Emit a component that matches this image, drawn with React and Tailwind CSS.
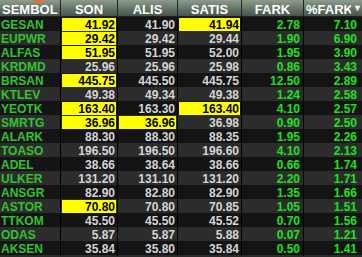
const ROWS = [
  ['GESAN', '41.92', '41.90', '41.94', '2.78', '7.10', [1, 3]],
  ['EUPWR', '29.42', '29.42', '29.44', '1.90', '6.90', [1]],
  ['ALFAS', '51.95', '51.95', '52.00', '1.95', '3.90', [1]],
  ['KRDMD', '25.96', '25.96', '25.98', '0.86', '3.43', []],
  ['BRSAN', '445.75', '445.50', '445.75', '12.50', '2.89', [1]],
  ['KTLEV', '49.38', '49.34', '49.38', '1.24', '2.58', []],
  ['YEOTK', '163.40', '163.30', '163.40', '4.10', '2.57', [1, 3]],
  ['SMRTG', '36.96', '36.96', '36.98', '0.90', '2.50', [1, 2]],
  ['ALARK', '88.30', '88.30', '88.35', '1.95', '2.26', []],
  ['TOASO', '196.50', '196.50', '196.60', '4.10', '2.13', []],
  ['ADEL', '38.66', '38.64', '38.66', '0.66', '1.74', []],
  ['ULKER', '131.20', '131.10', '131.20', '2.20', '1.71', []],
  ['ANSGR', '82.90', '82.80', '82.90', '1.35', '1.66', []],
  ['ASTOR', '70.80', '70.80', '70.85', '1.05', '1.51', [1]],
  ['TTKOM', '45.50', '45.50', '45.52', '0.70', '1.56', []],
  ['ODAS', '5.87', '5.87', '5.88', '0.07', '1.21', []],
  ['AKSEN', '35.84', '35.80', '35.84', '0.50', '1.41', []],
]

const HEADERS = ['SEMBOL', 'SON', 'ALIS', 'SATIS', 'FARK']

function PriceCell({ value, hot }) {
  return (
    <div className="h-full border-r border-black py-px pl-px pr-px">
      <div
        className={
          hot
            ? 'flex h-[13px] items-center justify-end bg-[#ffff00] pr-[1px] text-black'
            : 'flex h-[13px] items-center justify-end pr-[1px] text-[#d4d4d4]'
        }
      >
        {value}
      </div>
    </div>
  )
}

export default function App() {
  return (
    <div
      className="relative w-[362px] overflow-hidden bg-[#141414] text-[12px] font-bold leading-none"
      style={{ fontFamily: '"Liberation Sans", Arial, sans-serif' }}
    >
      <div className="absolute left-[34px] top-0 h-[3px] w-[9px] bg-[#e0703a]" />
      <div className="grid h-[17px] grid-cols-[61px_57px_60px_64px_62px_58px] border-b border-[#1a221a] bg-gradient-to-b from-[#8e9c8c] to-[#46544a] text-[13px] text-white">
        {HEADERS.map((h, i) => (
          <div
            key={h}
            className={
              i === 0
                ? 'flex items-center border-r border-[#1f261f] pl-[2px] pt-[2px]'
                : 'flex items-center justify-center border-r border-[#1f261f] pt-[2px]'
            }
          >
            {h}
          </div>
        ))}
        <div className="flex items-center pl-[2px] pt-[2px]">
          <span className="w-[45px] overflow-hidden whitespace-nowrap">%FARK</span>
          <span className="ml-[2px] pb-[1px] text-[9px] leading-none">▼</span>
        </div>
      </div>
      {ROWS.map((r, idx) => (
        <div
          key={r[0]}
          className={
            idx % 2 === 0
              ? 'grid h-[14px] grid-cols-[61px_57px_60px_64px_62px_58px] bg-[#141414]'
              : 'grid h-[14px] grid-cols-[61px_57px_60px_64px_62px_58px] bg-[#2c2c2c]'
          }
        >
          <div className="flex items-center border-r border-black pl-[1px] text-[#2fc42f]">
            {r[0]}
          </div>
          <PriceCell value={r[1]} hot={r[6].includes(1)} />
          <PriceCell value={r[2]} hot={r[6].includes(2)} />
          <PriceCell value={r[3]} hot={r[6].includes(3)} />
          <div className="flex items-center justify-end border-r border-black pr-[3px] text-[#1fe01f]">
            {r[4]}
          </div>
          <div className="flex items-center justify-end pr-[5px] text-[#1fe01f]">{r[5]}</div>
        </div>
      ))}
      <div className="h-[14px] bg-[#2c2c2c]" />
    </div>
  )
}
